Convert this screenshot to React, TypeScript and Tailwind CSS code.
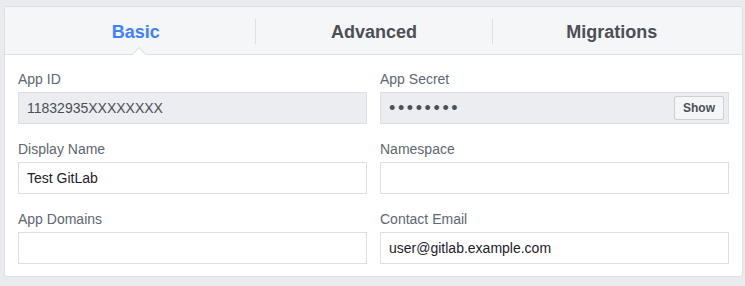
import React from "react";

const font = { fontFamily: '"Liberation Sans", Arial, Helvetica, sans-serif' };

function Field({
  label,
  value,
  readOnly,
  children,
}: {
  label: string;
  value?: string;
  readOnly?: boolean;
  children?: React.ReactNode;
}) {
  return (
    <div className="flex flex-col">
      <div className="h-[18px] text-[14px] leading-[18px] text-[#606770] mb-[4px]">{label}</div>
      <div
        className={
          "h-[32px] border border-[#dddfe2] flex items-center pl-[8px] pr-[4px] text-[14px] " +
          (readOnly ? "bg-[#ebedf0] text-[#4b4f56]" : "bg-white text-[#1d2129]")
        }
      >
        {children ?? <span className="flex-1">{value}</span>}
      </div>
    </div>
  );
}

export default function App() {
  return (
    <div className="w-[745px] h-[286px] bg-[#e9ebee] pt-[6px] pl-[4px]" style={font}>
      <div className="w-[739px] h-[271px] bg-white border border-[#dddfe2] rounded-[3px] overflow-hidden flex flex-col">
        <div className="relative h-[48px] bg-[#f5f6f7] border-b border-[#dddfe2] px-[12px] pt-[2px] grid grid-cols-3 items-center shrink-0">
          <div className="flex items-center justify-center h-[25px] pt-[2px] text-[18px] font-bold text-[#4080ff]">
            Basic
          </div>
          <div className="flex items-center justify-center h-[25px] pt-[2px] border-l border-[#dddfe2] text-[18px] font-bold text-[#4b4f56]">
            Advanced
          </div>
          <div className="flex items-center justify-center h-[25px] pt-[2px] border-l border-[#dddfe2] text-[18px] font-bold text-[#4b4f56]">
            Migrations
          </div>
          <div className="absolute left-[129px] top-[42px] w-[10px] h-[10px] bg-white border-t border-l border-[#dddfe2] rotate-45 z-10" />
        </div>
        <div className="px-[13px] pt-[15px] grid grid-cols-2 gap-x-[13px] gap-y-[16px]">
          <Field label="App ID" value="11832935XXXXXXXX" readOnly />
          <Field label="App Secret" readOnly>
            <span className="flex-1 text-[18px] leading-none tracking-[2.6px] text-[#4b4f56]">••••••••</span>
            <button className="h-[24px] w-[50px] bg-[#f5f6f7] border border-[#ccd0d5] rounded-[2px] text-[12px] font-bold text-[#4b4f56] flex items-center justify-center">
              Show
            </button>
          </Field>
          <Field label="Display Name" value="Test GitLab" />
          <Field label="Namespace" value="" />
          <Field label="App Domains" value="" />
          <Field label="Contact Email" value="user@gitlab.example.com" />
        </div>
      </div>
    </div>
  );
}
